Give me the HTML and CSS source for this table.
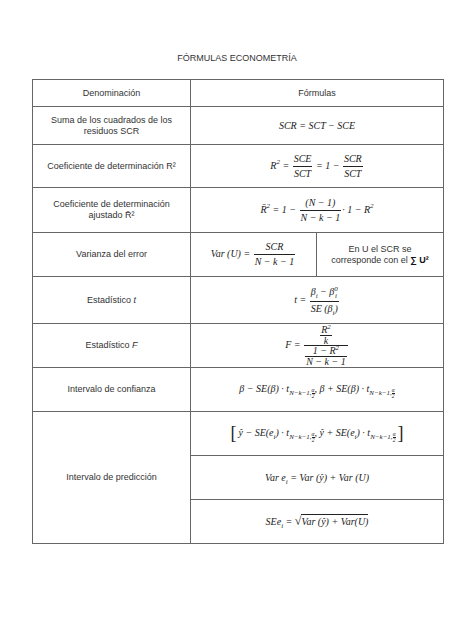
FILE: index.html
```html
<!DOCTYPE html>
<html lang="es">
<head>
<meta charset="utf-8">
<link rel="stylesheet" href="styles.css">
</head>
<body>
<div class="page">
  <h1 class="title">FÓRMULAS ECONOMETRÍA</h1>
  <table class="tbl">
    <colgroup><col class="c1"><col class="c2"><col class="c3"></colgroup>
    <tr class="h27">
      <td class="lbl">Denominación</td>
      <td class="lbl" colspan="2">Fórmulas</td>
    </tr>
    <tr class="h38">
      <td class="lbl">Suma de los cuadrados de los<br>residuos SCR</td>
      <td class="m" colspan="2">SCR = SCT − SCE</td>
    </tr>
    <tr class="h43">
      <td class="lbl">Coeficiente de determinación R²</td>
      <td class="m" colspan="2">R<sup>2</sup> = <span class="frac"><span class="num">SCE</span><span class="den">SCT</span></span> = 1 − <span class="frac"><span class="num">SCR</span><span class="den">SCT</span></span></td>
    </tr>
    <tr class="h45">
      <td class="lbl">Coeficiente de determinación<br>ajustado R̄²</td>
      <td class="m" colspan="2">R̄<sup>2</sup> = 1 − <span class="frac"><span class="num">(N − 1)</span><span class="den">N − k − 1</span></span>· 1 − R<sup>2</sup></td>
    </tr>
    <tr class="h44">
      <td class="lbl">Varianza del error</td>
      <td class="m">Var (U) = <span class="frac"><span class="num">SCR</span><span class="den">N − k − 1</span></span></td>
      <td class="lbl">En U el SCR se<br>corresponde con el <b>∑ U²</b></td>
    </tr>
    <tr class="h47">
      <td class="lbl">Estadístico <i>t</i></td>
      <td class="m" colspan="2">t = <span class="frac"><span class="num">β<sub>i</sub> − β<span class="ss"><span class="sp">0</span><span class="sb">i</span></span></span><span class="den">SE (β<sub>i</sub>)</span></span></td>
    </tr>
    <tr class="h44">
      <td class="lbl">Estadístico <i>F</i></td>
      <td class="m tight" colspan="2">F = <span class="frac"><span class="num"><span class="frac"><span class="num">R<sup>2</sup></span><span class="den">k</span></span></span><span class="den"><span class="frac"><span class="num">1 − R<sup>2</sup></span><span class="den">N − k − 1</span></span></span></span></td>
    </tr>
    <tr class="h44">
      <td class="lbl">Intervalo de confianza</td>
      <td class="m" colspan="2">β − SE(β) · t<span class="sub">N−k−1,<span class="sfrac"><span class="sn">α</span><span class="sd">2</span></span></span>, β + SE(β) · t<span class="sub">N−k−1,<span class="sfrac"><span class="sn">α</span><span class="sd">2</span></span></span></td>
    </tr>
    <tr class="h44">
      <td class="lbl" rowspan="3">Intervalo de predicción</td>
      <td class="m" colspan="2"><span class="br">[</span>ŷ − SE(e<sub>i</sub>) · t<span class="sub">N−k−1,<span class="sfrac"><span class="sn">α</span><span class="sd">2</span></span></span>, ŷ + SE(e<sub>i</sub>) · t<span class="sub">N−k−1,<span class="sfrac"><span class="sn">α</span><span class="sd">2</span></span></span><span class="br">]</span></td>
    </tr>
    <tr class="h44">
      <td class="m" colspan="2">Var e<sub>i</sub> = Var (ŷ) + Var (U)</td>
    </tr>
    <tr class="h44">
      <td class="m" colspan="2">SEe<sub>i</sub> = <span class="root">√</span><span class="rad">Var (ŷ) + Var(U)</span></td>
    </tr>
  </table>
</div>
</body>
</html>
```

FILE: styles.css
```css
html, body {
  margin: 0;
  padding: 0;
  background: #ffffff;
}
.page {
  padding: 52px 0 0 32px;
  font-family: "Liberation Sans", Arial, sans-serif;
  color: #333;
}
.title {
  margin: 0 0 15px 0;
  width: 410px;
  text-align: center;
  font-weight: normal;
  font-size: 9px;
  line-height: 12px;
  color: #333;
  letter-spacing: 0;
}
.tbl {
  border-collapse: collapse;
  table-layout: fixed;
  width: 411px;
}
.c1 { width: 158px; }
.c2 { width: 126px; }
.c3 { width: 127px; }
.tbl td {
  border: 1.5px solid #666;
  padding: 0 4px;
  text-align: center;
  vertical-align: middle;
}
.h27 { height: 27px; }
.h38 { height: 38px; }
.h43 { height: 43px; }
.h44 { height: 44px; }
.h45 { height: 45px; }
.h47 { height: 47px; }
.lbl {
  font-size: 9px;
  line-height: 11px;
  color: #333;
}
.lbl b { color: #111; }
.m {
  font-family: "Liberation Serif", "Times New Roman", serif;
  font-style: italic;
  font-size: 10px;
  line-height: 12px;
  color: #222;
  white-space: nowrap;
}
.m sup, .m sub {
  font-size: 7px;
  line-height: 0;
}
.frac {
  display: inline-flex;
  flex-direction: column;
  vertical-align: middle;
  text-align: center;
  margin: 0 1px;
}
.frac .num {
  padding: 0 1px 1px;
}
.frac .den {
  border-top: 1px solid #222;
  padding: 1px 1px 0;
}
.frac .frac { margin: 0; }
.tight {
  padding: 0 4px !important;
  line-height: 9.5px;
}
.tight .frac .num, .tight .frac .den {
  padding-top: 0;
  padding-bottom: 0;
}
.tight .frac .frac .num { padding-bottom: 0; }
.ss {
  display: inline-flex;
  flex-direction: column;
  vertical-align: middle;
  font-size: 7px;
  line-height: 7px;
}
.sub {
  font-size: 7px;
  position: relative;
  top: 3px;
}
.sfrac {
  display: inline-flex;
  flex-direction: column;
  vertical-align: middle;
  font-size: 5.5px;
  line-height: 5px;
  text-align: center;
}
.sfrac .sd { border-top: 0.5px solid #222; }
.br {
  font-style: normal;
  font-size: 18px;
  vertical-align: -3px;
  font-weight: 300;
  margin: 0 2px;
}
.root {
  font-style: normal;
  font-size: 12px;
}
.rad {
  border-top: 1px solid #222;
  padding-top: 1px;
}
```
